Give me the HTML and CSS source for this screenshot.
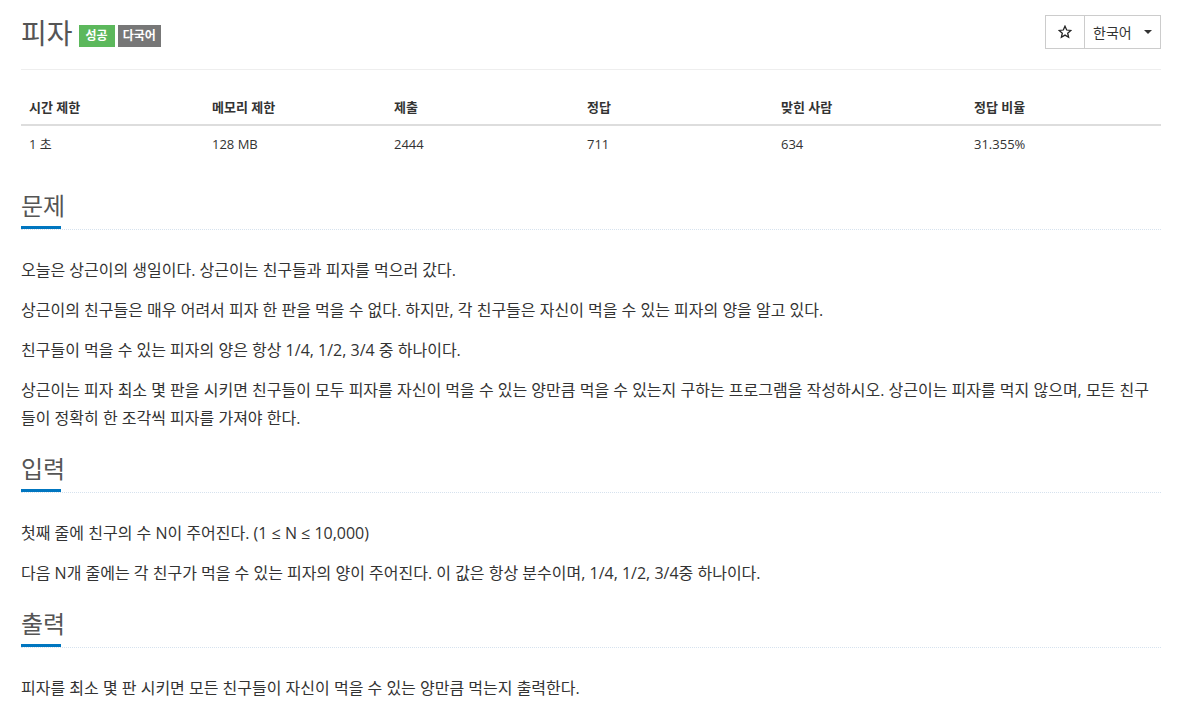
FILE: index.html
```html
<!DOCTYPE html>
<html lang="ko">
<head>
<meta charset="utf-8">
<title>피자</title>
<link rel="stylesheet" href="styles.css">
</head>
<body>
<div class="container">
  <div class="page-header">
    <div class="title-wrap">
      <h1 class="title">피자</h1>
      <span class="label label-success">성공</span>
      <span class="label label-default">다국어</span>
    </div>
    <div class="btn-group">
      <button class="btn btn-star" type="button" aria-label="즐겨찾기">
        <svg width="14" height="14" viewBox="0 0 24 24" aria-hidden="true"><polygon points="12,2 14.9,8.6 22,9.3 16.6,14 18.2,21 12,17.3 5.8,21 7.4,14 2,9.3 9.1,8.6" fill="none" stroke="#222" stroke-width="2.2" stroke-linejoin="miter"/></svg>
      </button>
      <button class="btn btn-lang" type="button">한국어 <span class="caret"></span></button>
    </div>
  </div>

  <table class="info-table">
    <thead>
      <tr>
        <th class="c1">시간 제한</th>
        <th class="c2">메모리 제한</th>
        <th class="c3">제출</th>
        <th class="c4">정답</th>
        <th class="c5">맞힌 사람</th>
        <th class="c6">정답 비율</th>
      </tr>
    </thead>
    <tbody>
      <tr>
        <td>1 초</td>
        <td>128 MB</td>
        <td>2444</td>
        <td>711</td>
        <td>634</td>
        <td>31.355%</td>
      </tr>
    </tbody>
  </table>

  <section class="problem-section">
    <div class="headline"><h2>문제</h2></div>
    <div class="problem-text">
      <p>오늘은 상근이의 생일이다. 상근이는 친구들과 피자를 먹으러 갔다.</p>
      <p>상근이의 친구들은 매우 어려서 피자 한 판을 먹을 수 없다. 하지만, 각 친구들은 자신이 먹을 수 있는 피자의 양을 알고 있다.</p>
      <p>친구들이 먹을 수 있는 피자의 양은 항상 1/4, 1/2, 3/4 중 하나이다.</p>
      <p>상근이는 피자 최소 몇 판을 시키면 친구들이 모두 피자를 자신이 먹을 수 있는 양만큼 먹을 수 있는지 구하는 프로그램을 작성하시오. 상근이는 피자를 먹지 않으며, 모든 친구들이 정확히 한 조각씩 피자를 가져야 한다.</p>
    </div>
  </section>

  <section class="problem-section">
    <div class="headline"><h2>입력</h2></div>
    <div class="problem-text">
      <p>첫째 줄에 친구의 수 N이 주어진다. (1 ≤ N ≤ 10,000)</p>
      <p>다음 N개 줄에는 각 친구가 먹을 수 있는 피자의 양이 주어진다. 이 값은 항상 분수이며, 1/4, 1/2, 3/4중 하나이다.</p>
    </div>
  </section>

  <section class="problem-section">
    <div class="headline"><h2>출력</h2></div>
    <div class="problem-text">
      <p>피자를 최소 몇 판 시키면 모든 친구들이 자신이 먹을 수 있는 양만큼 먹는지 출력한다.</p>
    </div>
  </section>
</div>
</body>
</html>
```

FILE: styles.css
```css
html, body {
  margin: 0;
  padding: 0;
  background: #fff;
}

body {
  font-family: "Open Sans", "Noto Sans CJK KR", sans-serif;
  font-size: 14px;
  color: #333;
}

.container {
  width: 1140px;
  margin-left: 21px;
}

.page-header {
  display: flex;
  justify-content: space-between;
  align-items: flex-start;
  border-bottom: 1px solid #eee;
  padding-top: 15px;
  height: 54px;
}

.title-wrap {
  display: flex;
  align-items: center;
  gap: 3px;
  height: 36px;
}

.title {
  margin: 0 3px 0 0;
  font-size: 28px;
  font-weight: 400;
  color: #555;
  line-height: 36px;
}

.label {
  display: inline-block;
  height: 22px;
  line-height: 22px;
  padding: 0 6px;
  font-size: 12px;
  font-weight: 700;
  color: #fff;
  margin-top: 5px;
}

.label-success { background: #5cb85c; padding: 0 7px; }
.label-default { background: #777; padding: 0 5px; }

.btn-group {
  display: flex;
  height: 34px;
}

.btn {
  font-family: inherit;
  background: #fff;
  border: 1px solid #ccc;
  color: #333;
  font-size: 14px;
  height: 34px;
  padding: 0 12px;
  margin: 0;
  display: flex;
  align-items: center;
}

.btn-star {
  width: 40px;
  justify-content: center;
  padding: 0;
}

.btn-lang {
  border-left: none;
  width: 76px;
  padding: 0 8px;
  gap: 12px;
}

.caret {
  display: inline-block;
  width: 0;
  height: 0;
  border-top: 4px solid #333;
  border-left: 4px solid transparent;
  border-right: 4px solid transparent;
}

.info-table {
  width: 1140px;
  border-collapse: collapse;
  margin-top: 20px;
  margin-bottom: 26px;
}

.info-table th,
.info-table td {
  text-align: left;
  padding: 8px;
  font-size: 13px;
  line-height: 20px;
}

.info-table th {
  font-weight: 700;
  border-bottom: 2px solid #ddd;
  padding-top: 7px;
  padding-bottom: 7px;
}

.info-table td {
  padding-top: 8px;
  padding-bottom: 8px;
}

.c1 { width: 167px; }
.c2 { width: 166px; }
.c3 { width: 177px; }
.c4 { width: 178px; }
.c5 { width: 177px; }

.problem-section {
  margin-bottom: 19px;
}

.headline {
  border-bottom: 1px dotted #d6e2ee;
  height: 41px;
}

.headline h2 {
  margin: 0;
  display: inline-block;
  font-size: 24px;
  font-weight: 400;
  color: #555;
  line-height: 36px;
  border-bottom: 3px solid #0076c0;
  padding-bottom: 2px;
  width: 40px;
  white-space: nowrap;
}

.problem-text {
  padding-top: 26px;
  font-size: 16px;
  line-height: 28px;
  color: #333;
}

.problem-text p {
  margin: 0 0 12px 0;
}
```
